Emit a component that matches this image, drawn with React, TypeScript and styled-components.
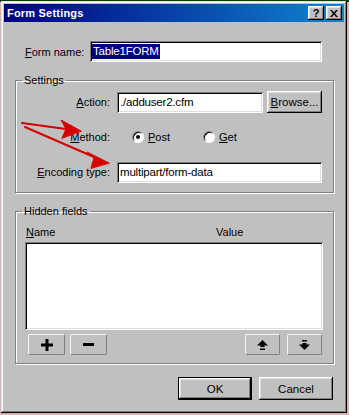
import React from "react";
import styled, { createGlobalStyle } from "styled-components";

const GlobalStyle = createGlobalStyle`
  html, body {
    margin: 0;
    padding: 0;
  }
  body {
    width: 349px;
    height: 415px;
    overflow: hidden;
    background: linear-gradient(#0d3b12 0 2px, #d9b3b3 2px);
    font-family: "Liberation Sans", Arial, sans-serif;
    font-size: 11px;
    color: #000;
  }
`;

const Page = styled.div`
  position: relative;
  padding: 1px 0 0 1px;
`;

const Window = styled.div`
  box-sizing: border-box;
  width: 346px;
  height: 412px;
  padding: 3px;
  background: #c0c0c0;
  box-shadow: inset -1px -1px #000, inset 1px 1px #dfdfdf,
    inset -2px -2px #808080, inset 2px 2px #fff;
  display: flex;
  flex-direction: column;
`;

const TitleBar = styled.div`
  height: 18px;
  display: flex;
  align-items: center;
  padding: 0 2px 0 3px;
  background: linear-gradient(90deg, #000080, #1084d0);
`;

const Title = styled.div`
  flex: 1;
  color: #fff;
  font-weight: bold;
  font-size: 11px;
  letter-spacing: 0.2px;
`;

const TitleButton = styled.div<{ $gap?: number }>`
  width: 16px;
  height: 14px;
  margin-left: ${(p) => p.$gap ?? 0}px;
  background: #c0c0c0;
  box-shadow: inset -1px -1px #000, inset 1px 1px #fff,
    inset -2px -2px #808080, inset 2px 2px #dfdfdf;
  display: flex;
  align-items: center;
  justify-content: center;
  font-weight: bold;
  font-size: 11px;
`;

const Content = styled.div`
  flex: 1;
  display: flex;
  flex-direction: column;
  padding: 0 10px 0 11px;
`;

const NameRow = styled.div`
  display: flex;
  align-items: center;
  margin-top: 19px;
  padding-left: 10px;
`;

const NameLabel = styled.div`
  width: 65px;
`;

const Field = styled.div<{ $w: number }>`
  box-sizing: border-box;
  width: ${(p) => p.$w}px;
  height: 21px;
  padding: 0 3px;
  background: #fff;
  display: flex;
  align-items: center;
  white-space: nowrap;
  font-size: 11.5px;
  letter-spacing: -0.2px;
  box-shadow: inset 1px 1px #808080, inset -1px -1px #fff,
    inset 2px 2px #000, inset -2px -2px #dfdfdf;
`;

const Selected = styled.span`
  background: #000080;
  color: #fff;
  padding: 1px 1px 2px;
  margin-left: -1px;
`;

const Group = styled.fieldset<{ $top: number }>`
  margin: ${(p) => p.$top}px 0 0;
  padding: 0;
  min-width: 0;
  border: 1px solid #808080;
  box-shadow: 1px 1px 0 #fff, inset 1px 1px 0 #fff;
`;

const Legend = styled.legend`
  margin-left: 6px;
  padding: 0 2px;
  line-height: 13px;
`;

const SettingsGrid = styled.div`
  display: grid;
  grid-template-columns: 94px 205px;
  column-gap: 7px;
  row-gap: 13px;
  align-items: center;
  padding: 4px 0 9px;
`;

const RowLabel = styled.div`
  text-align: right;
`;

const Controls = styled.div`
  display: flex;
  align-items: center;
  height: 22px;
`;

const Button = styled.div<{ $w: number; $h: number; $default?: boolean }>`
  box-sizing: border-box;
  width: ${(p) => p.$w}px;
  height: ${(p) => p.$h}px;
  background: #c0c0c0;
  display: flex;
  align-items: center;
  justify-content: center;
  font-size: 11.5px;
  border: ${(p) => (p.$default ? "1px solid #000" : "none")};
  box-shadow: inset -1px -1px #000, inset 1px 1px #fff,
    inset -2px -2px #808080, inset 2px 2px #dfdfdf;
`;

const Radio = styled.span<{ $checked?: boolean }>`
  box-sizing: border-box;
  width: 12px;
  height: 12px;
  border-radius: 50%;
  background: #fff;
  border: 1px solid;
  border-color: #808080 #fff #fff #808080;
  box-shadow: inset 1px 1px #000;
  display: flex;
  align-items: center;
  justify-content: center;
  &::after {
    content: "";
    display: ${(p) => (p.$checked ? "block" : "none")};
    width: 4px;
    height: 4px;
    border-radius: 50%;
    background: #000;
  }
`;

const RadioOption = styled.div<{ $left: number }>`
  display: flex;
  align-items: center;
  gap: 4px;
  margin-left: ${(p) => p.$left}px;
`;

const HiddenBody = styled.div`
  display: flex;
  flex-direction: column;
  padding: 0 10px 8px 9px;
`;

const ListHeader = styled.div`
  display: flex;
  height: 13px;
  margin-top: 8px;
  padding-left: 1px;
`;

const HeaderCell = styled.div<{ $w?: number }>`
  width: ${(p) => (p.$w ? `${p.$w}px` : "auto")};
`;

const ListBox = styled.div`
  height: 88px;
  margin-top: 3px;
  background: #fff;
  box-shadow: inset 1px 1px #808080, inset -1px -1px #fff,
    inset 2px 2px #000, inset -2px -2px #dfdfdf;
`;

const ToolRow = styled.div`
  display: flex;
  align-items: center;
  margin-top: 4px;
  padding: 0 1px 0 3px;
`;

const ToolButton = styled.div<{ $w: number; $gap?: number }>`
  box-sizing: border-box;
  width: ${(p) => p.$w}px;
  height: 21px;
  margin-left: ${(p) => p.$gap ?? 0}px;
  border-radius: 2px;
  border: 1px solid;
  border-color: #f4f4f4 #808080 #808080 #f4f4f4;
  display: flex;
  align-items: center;
  justify-content: center;
`;

const Spacer = styled.div`
  flex: 1;
`;

const Footer = styled.div`
  display: flex;
  justify-content: flex-end;
  gap: 7px;
  margin-top: 13px;
  padding-right: 1px;
`;

const Arrows = styled.svg`
  position: absolute;
  left: 0;
  top: 0;
  pointer-events: none;
`;

const App = () => (
  <Page>
    <GlobalStyle />
    <Window>
      <TitleBar>
        <Title>Form Settings</Title>
        <TitleButton>?</TitleButton>
        <TitleButton $gap={2}>
          <svg width="8" height="7" viewBox="0 0 8 7">
            <path d="M0 0h2l2 2.5L6 0h2L5 3.5 8 7H6L4 4.5 2 7H0l3-3.5z" fill="#000" />
          </svg>
        </TitleButton>
      </TitleBar>
      <Content>
        <NameRow>
          <NameLabel>
            <u>F</u>orm name:
          </NameLabel>
          <Field $w={232}>
            <Selected>Table1FORM</Selected>
          </Field>
        </NameRow>

        <Group $top={12}>
          <Legend>Settings</Legend>
          <SettingsGrid>
            <RowLabel>
              <u>A</u>ction:
            </RowLabel>
            <Controls>
              <Field $w={146}>./adduser2.cfm</Field>
              <Button $w={55} $h={22} style={{ marginLeft: 4 }}>
                <u>B</u>rowse...
              </Button>
            </Controls>
            <RowLabel>
              <u>M</u>ethod:
            </RowLabel>
            <Controls>
              <RadioOption $left={15}>
                <Radio $checked />
                <span>
                  <u>P</u>ost
                </span>
              </RadioOption>
              <RadioOption $left={33}>
                <Radio />
                <span>
                  <u>G</u>et
                </span>
              </RadioOption>
            </Controls>
            <RowLabel>
              <u>E</u>ncoding type:
            </RowLabel>
            <Controls>
              <Field $w={205}>multipart/form-data</Field>
            </Controls>
          </SettingsGrid>
        </Group>

        <Group $top={12}>
          <Legend>Hidden fields</Legend>
          <HiddenBody>
            <ListHeader>
              <HeaderCell $w={190}>
                <u>N</u>ame
              </HeaderCell>
              <HeaderCell>Value</HeaderCell>
            </ListHeader>
            <ListBox />
            <ToolRow>
              <ToolButton $w={37}>
                <svg width="12" height="12" viewBox="0 0 12 12">
                  <path d="M4.5 0h3v4.5H12v3H7.5V12h-3V7.5H0v-3h4.5z" fill="#000" />
                </svg>
              </ToolButton>
              <ToolButton $w={37} $gap={5}>
                <svg width="11" height="3" viewBox="0 0 11 3">
                  <rect width="11" height="3" fill="#000" />
                </svg>
              </ToolButton>
              <Spacer />
              <ToolButton $w={35}>
                <svg width="11" height="10" viewBox="0 0 11 10">
                  <path d="M5.5 0L11 5.5H7.5V7h-4V5.5H0z M3 8.5h5V10H3z" fill="#000" />
                </svg>
              </ToolButton>
              <ToolButton $w={35} $gap={7}>
                <svg width="11" height="10" viewBox="0 0 11 10">
                  <path d="M3 0h5v1.5H3z M3.5 3h4v1.5H11L5.5 10 0 4.5h3.5z" fill="#000" />
                </svg>
              </ToolButton>
            </ToolRow>
          </HiddenBody>
        </Group>

        <Footer>
          <Button $w={74} $h={23} $default>
            OK
          </Button>
          <Button $w={74} $h={23}>
            Cancel
          </Button>
        </Footer>
      </Content>
    </Window>

    <Arrows width="349" height="415" viewBox="0 0 349 415">
      <g stroke="#d40000" strokeWidth="2" fill="#d40000" strokeLinecap="round">
        <line x1="22" y1="123" x2="66" y2="129" />
        <polygon points="81,131 61,120 66,129 62,138" strokeWidth="1" />
        <line x1="25" y1="127" x2="94" y2="157" />
        <polygon points="109,163 87,152 94,158 91,168" strokeWidth="1" />
      </g>
    </Arrows>
  </Page>
);

export default App;
